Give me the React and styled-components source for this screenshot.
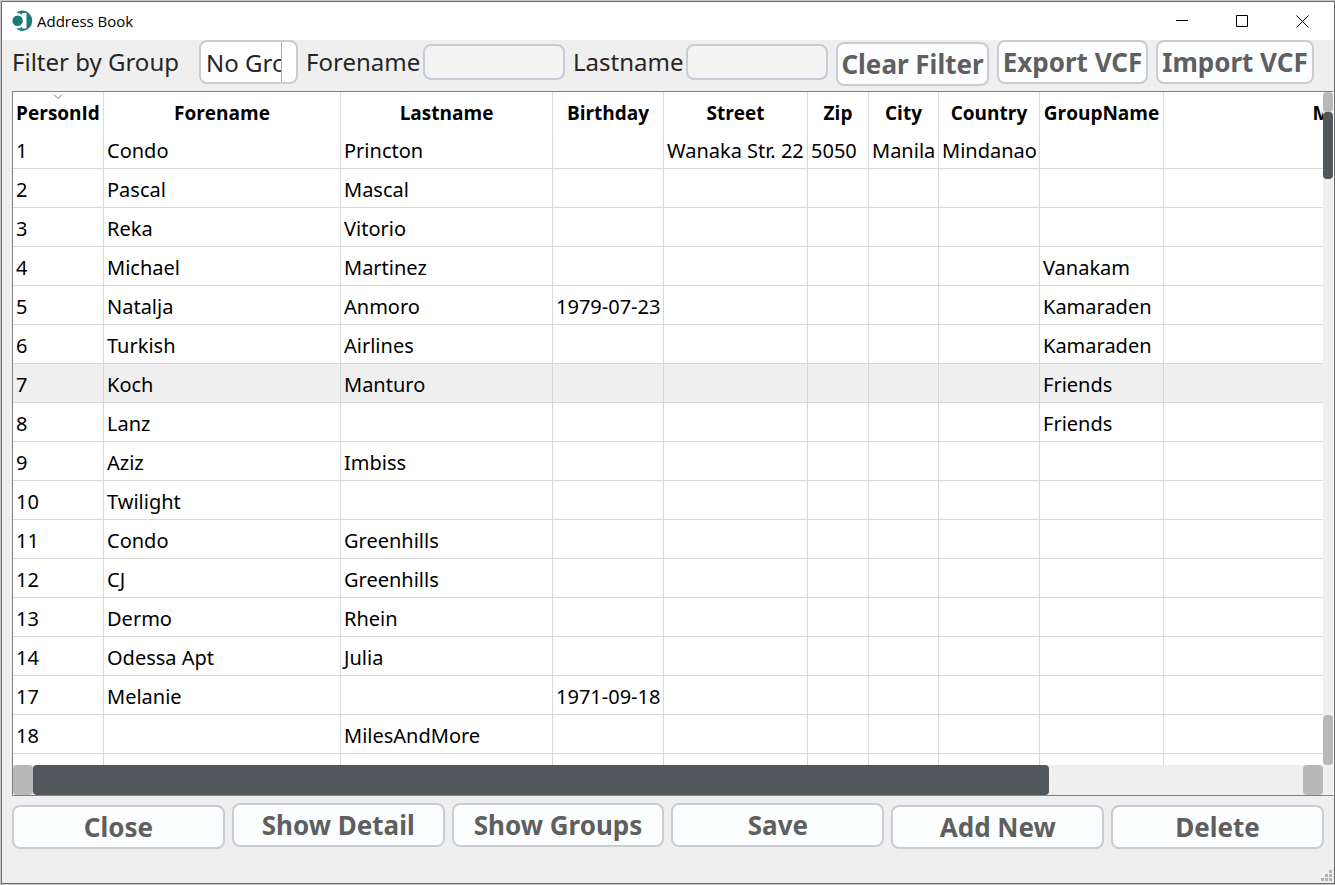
import React from "react";
import styled, { createGlobalStyle } from "styled-components";

const GlobalStyle = createGlobalStyle`
  *, *::before, *::after { box-sizing: border-box; }
  body {
    margin: 0;
    background: #c8c8c8;
    font-family: "Noto Sans", "Open Sans", sans-serif;
    color: #000;
  }
`;

const Desktop = styled.div`
  display: flex;
  height: 100vh;
  padding: 1px 0 1px 1px;
`;

const Window = styled.div`
  flex: 1;
  min-width: 0;
  display: flex;
  flex-direction: column;
  border: 1px solid #6b6b6b;
  background: #efefef;
`;

const TitleBar = styled.header`
  display: flex;
  align-items: center;
  height: 38px;
  padding: 0 2px 0 10px;
  background: #fff;
`;

const Title = styled.h1`
  flex: 1;
  margin: 0 0 0 4px;
  font-family: "Open Sans", "Noto Sans", sans-serif;
  font-size: 15px;
  font-weight: 400;
  line-height: 20px;
`;

const CaptionButton = styled.button`
  display: grid;
  place-items: center;
  width: 60px;
  height: 38px;
  padding: 0;
  border: 0;
  background: transparent;
`;

const FilterBar = styled.form`
  display: flex;
  align-items: flex-start;
  gap: 8px;
  height: 51px;
  padding: 0 20px 0 10px;
`;

const FilterLabel = styled.label`
  flex: none;
  width: ${(p) => p.$width}px;
  font-size: 24px;
  line-height: 44px;
  white-space: nowrap;
  color: #262626;
`;

const GroupSelect = styled.select`
  flex: none;
  appearance: none;
  width: 99px;
  height: 44px;
  padding: 0 15px 0 5px;
  border: 2px solid #c9ccd2;
  border-radius: 8px;
  background: linear-gradient(#a8abae, #a8abae) right 14px top / 1px 100% no-repeat #fff;
  font: inherit;
  font-size: 24px;
  color: #262626;
`;

const FilterInput = styled.input`
  flex: 1;
  min-width: 0;
  height: 36px;
  margin-top: 4px;
  padding: 0 8px;
  border: 2px solid #c9ccd6;
  border-radius: 8px;
  background: #f3f3f3;
  font: inherit;
  font-size: 20px;
`;

const Button = styled.button`
  flex: none;
  width: ${(p) => (p.$width ? `${p.$width}px` : "100%")};
  height: 44px;
  margin-top: ${(p) => (p.$sunken ? 2 : 0)}px;
  padding: 0;
  border: 2px solid #c9cdd2;
  border-radius: 8px;
  background: #fcfdfe;
  font: inherit;
  font-size: 26px;
  font-weight: 700;
  line-height: 36px;
  white-space: nowrap;
  color: #5f5f5f;
`;

const TableFrame = styled.main`
  flex: 1;
  min-height: 0;
  display: grid;
  grid-template-columns: minmax(0, 1fr) 10px;
  grid-template-rows: minmax(0, 1fr) 30px;
  margin-left: 10px;
  border: 1px solid #808285;
  border-right-color: #fff;
`;

const Viewport = styled.div`
  overflow: hidden;
  background: #fff;
`;

const Table = styled.table`
  width: 1467px;
  table-layout: fixed;
  border-collapse: separate;
  border-spacing: 0;
  font-size: 20px;
  line-height: 28px;
`;

const HeadCell = styled.th`
  position: ${(p) => (p.$sorted ? "relative" : "static")};
  height: 38px;
  padding: 4px 0 0;
  border-right: 1px solid #dcdcdc;
  white-space: nowrap;
  font-family: "Open Sans", "Noto Sans", sans-serif;
  font-size: 19px;
  font-weight: 700;
`;

const SortMark = styled.svg`
  position: absolute;
  top: 2px;
  left: 40px;
`;

const Row = styled.tr`
  background: ${(p) => (p.$current ? "#efefef" : "#fff")};
`;

const Cell = styled.td`
  height: 39px;
  padding: 3px 0 0 3px;
  border-right: 1px solid #d8d8d8;
  border-bottom: 1px solid #d8d8d8;
  white-space: nowrap;
`;

const VerticalBar = styled.div`
  display: flex;
  flex-direction: column;
`;

const HorizontalBar = styled.div`
  display: flex;
`;

const Stepper = styled.button`
  flex: none;
  width: ${(p) => p.$width}px;
  height: ${(p) => p.$height}px;
  padding: 0;
  border: 0;
  border-radius: 4px;
  background: #b8b8b8;
`;

const Track = styled.div`
  flex: 1;
  background: #efefef;
`;

const Thumb = styled.div`
  width: ${(p) => p.$width};
  height: ${(p) => p.$height};
  border-radius: 4px;
  background: #51585b;
`;

const ActionBar = styled.footer`
  display: grid;
  grid-template-columns: repeat(6, minmax(0, 1fr));
  align-items: start;
  gap: 7px;
  padding: 7px 10px 0;
`;

const StatusBar = styled.div`
  display: flex;
  justify-content: flex-end;
  align-items: flex-end;
  height: 34px;
  padding: 0 2px 2px 0;
`;

const columns = [
  ["PersonId", 91],
  ["Forename", 237],
  ["Lastname", 212],
  ["Birthday", 111],
  ["Street", 144],
  ["Zip", 61],
  ["City", 70],
  ["Country", 101],
  ["GroupName", 124],
  ["M", 316],
];

const people = [
  { PersonId: 1, Forename: "Condo", Lastname: "Princton", Street: "Wanaka Str. 22", Zip: "5050", City: "Manila", Country: "Mindanao" },
  { PersonId: 2, Forename: "Pascal", Lastname: "Mascal" },
  { PersonId: 3, Forename: "Reka", Lastname: "Vitorio" },
  { PersonId: 4, Forename: "Michael", Lastname: "Martinez", GroupName: "Vanakam" },
  { PersonId: 5, Forename: "Natalja", Lastname: "Anmoro", Birthday: "1979-07-23", GroupName: "Kamaraden" },
  { PersonId: 6, Forename: "Turkish", Lastname: "Airlines", GroupName: "Kamaraden" },
  { PersonId: 7, Forename: "Koch", Lastname: "Manturo", GroupName: "Friends" },
  { PersonId: 8, Forename: "Lanz", GroupName: "Friends" },
  { PersonId: 9, Forename: "Aziz", Lastname: "Imbiss" },
  { PersonId: 10, Forename: "Twilight" },
  { PersonId: 11, Forename: "Condo", Lastname: "Greenhills" },
  { PersonId: 12, Forename: "CJ", Lastname: "Greenhills" },
  { PersonId: 13, Forename: "Dermo", Lastname: "Rhein" },
  { PersonId: 14, Forename: "Odessa Apt", Lastname: "Julia" },
  { PersonId: 17, Forename: "Melanie", Birthday: "1971-09-18" },
  { PersonId: 18, Lastname: "MilesAndMore" },
  {},
];

const currentId = 7;

const actions = [
  ["Close", true],
  ["Show Detail", false],
  ["Show Groups", false],
  ["Save", false],
  ["Add New", true],
  ["Delete", true],
];

function Logo() {
  return (
    <svg width="21" height="22" viewBox="0 0 21 22" aria-hidden="true">
      <path d="M4 3 A10 10 0 0 1 10 .5 A10.2 10.2 0 0 1 10 21 A10 10 0 0 1 4 18.5 C7 18.6 9 18 10 16.5 V18.5 H14.5 V3 H10 V5 C9 3.6 7 3 4 3 Z" fill="#1a7a76" />
      <circle cx="5.6" cy="10.8" r="5.2" fill="#1a7a76" />
    </svg>
  );
}

function CaptionIcon({ d }) {
  return (
    <svg width="13" height="13" viewBox="0 0 13 13" fill="none" stroke="#000" aria-hidden="true">
      <path d={d} />
    </svg>
  );
}

function SizeGrip() {
  const dots = [[8, 0], [4, 4], [8, 4], [0, 8], [4, 8], [8, 8]];
  return (
    <svg width="11" height="11" viewBox="0 0 11 11" fill="#b4b4b4" aria-hidden="true">
      {dots.map(([x, y]) => (
        <rect key={`${x}-${y}`} x={x} y={y} width="3" height="3" />
      ))}
    </svg>
  );
}

export default function App() {
  return (
    <Desktop>
      <GlobalStyle />
      <Window>
        <TitleBar>
          <Logo />
          <Title>Address Book</Title>
          <CaptionButton type="button" aria-label="Minimize">
            <CaptionIcon d="M0 5.5H12" />
          </CaptionButton>
          <CaptionButton type="button" aria-label="Maximize">
            <CaptionIcon d="M.5 .5H11.5V11.5H.5Z" />
          </CaptionButton>
          <CaptionButton type="button" aria-label="Close window">
            <CaptionIcon d="M.5 .5L12.5 12.5M12.5 .5L.5 12.5" />
          </CaptionButton>
        </TitleBar>

        <FilterBar onSubmit={(e) => e.preventDefault()}>
          <FilterLabel htmlFor="group" $width={179}>Filter by Group</FilterLabel>
          <GroupSelect id="group" defaultValue="none">
            <option value="none">No Group</option>
          </GroupSelect>
          <FilterLabel htmlFor="forename" $width={109}>Forename</FilterLabel>
          <FilterInput id="forename" type="text" />
          <FilterLabel htmlFor="lastname" $width={105}>Lastname</FilterLabel>
          <FilterInput id="lastname" type="text" />
          <Button type="reset" $width={153} $sunken>Clear Filter</Button>
          <Button type="button" $width={151}>Export VCF</Button>
          <Button type="button" $width={158}>Import VCF</Button>
        </FilterBar>

        <TableFrame>
          <Viewport>
            <Table>
              <colgroup>
                {columns.map(([name, width]) => (
                  <col key={name} style={{ width }} />
                ))}
              </colgroup>
              <thead>
                <tr>
                  {columns.map(([name]) => (
                    <HeadCell key={name} scope="col" $sorted={name === "PersonId"}>
                      {name}
                      {name === "PersonId" && (
                        <SortMark width="10" height="6" viewBox="0 0 10 6" fill="none" stroke="#777" aria-hidden="true">
                          <path d="M1 .5L5 4.5L9 .5" />
                        </SortMark>
                      )}
                    </HeadCell>
                  ))}
                </tr>
              </thead>
              <tbody>
                {people.map((person, i) => (
                  <Row key={i} $current={person.PersonId === currentId}>
                    {columns.map(([name]) => (
                      <Cell key={name}>{person[name]}</Cell>
                    ))}
                  </Row>
                ))}
              </tbody>
            </Table>
          </Viewport>
          <VerticalBar>
            <Stepper type="button" aria-label="Scroll up" $width={10} $height={20} />
            <Track>
              <Thumb $width="100%" $height="67px" />
            </Track>
            <Stepper type="button" aria-label="Scroll down" $width={10} $height={50} />
          </VerticalBar>
          <HorizontalBar>
            <Stepper type="button" aria-label="Scroll left" $width={20} $height={30} />
            <Track>
              <Thumb $width="80%" $height="100%" />
            </Track>
            <Stepper type="button" aria-label="Scroll right" $width={20} $height={30} />
          </HorizontalBar>
        </TableFrame>

        <ActionBar>
          {actions.map(([name, sunken]) => (
            <Button key={name} type="button" $sunken={sunken}>{name}</Button>
          ))}
        </ActionBar>
        <StatusBar>
          <SizeGrip />
        </StatusBar>
      </Window>
    </Desktop>
  );
}
